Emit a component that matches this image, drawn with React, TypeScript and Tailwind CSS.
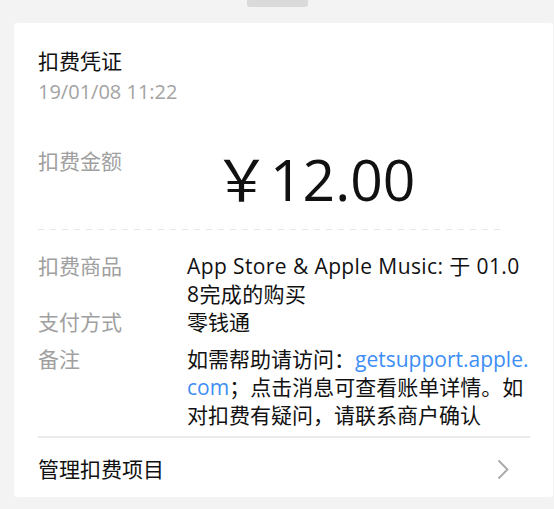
import React from 'react';

const rows = [
  {
    label: '扣费商品',
    value: (
      <span className="tracking-[0.4px]">
        App Store &amp; Apple Music: 于 01.0
        <br />
        8完成的购买
      </span>
    ),
  },
  { label: '支付方式', value: <>零钱通</> },
];

export default function App() {
  return (
    <div className="min-h-screen bg-[#f3f3f3] pb-3 font-['Open_Sans','Noto_Sans_CJK_SC',sans-serif] text-[#111]">
      <div className="flex justify-center h-[7px] overflow-hidden">
        <div className="mt-[-19px] h-[26px] w-[61px] rounded-[3px] bg-[#dadada] text-center text-[14px] leading-[26px] text-white">
          11:22
        </div>
      </div>

      <div className="mt-4 ml-[14px] mr-px rounded-[3px] bg-white pt-6 pl-6 pr-[23px] pb-[14px]">
        <h1 className="text-[21px] leading-7">扣费凭证</h1>
        <p className="mt-[3px] text-[20px] leading-7 text-[#a3a3a3]">19/01/08 11:22</p>

        <div className="mt-[41px] flex items-start">
          <div className="w-[149px] shrink-0 text-[21px] leading-7 text-[#a0a0a0]">扣费金额</div>
          <div className="mt-1 pl-[26px] text-[57px] leading-none">￥12.00</div>
        </div>

        <div className="mt-[21px] mr-[29px] h-px bg-[linear-gradient(to_right,#e6e6e6_50%,transparent_50%)] bg-[length:12px_1px]" />

        <div className="mt-[22px]">
          {rows.map(row => (
            <div key={row.label} className="flex text-[21px] leading-7">
              <div className="w-[149px] shrink-0 text-[#a0a0a0]">{row.label}</div>
              <div className="whitespace-nowrap">{row.value}</div>
            </div>
          ))}

          <div className="mt-[9px] flex text-[21px] leading-7">
            <div className="w-[149px] shrink-0 text-[#a0a0a0]">备注</div>
            <div className="whitespace-nowrap">
              如需帮助请访问：<span className="text-[#3d8ef5]">getsupport.apple.</span>
              <br />
              <span className="text-[#3d8ef5]">com</span>；点击消息可查看账单详情。如
              <br />
              对扣费有疑问，请联系商户确认
            </div>
          </div>
        </div>

        <div className="mt-[7px] h-[2px] bg-[#ebebeb]" />

        <div className="mt-[17px] flex items-center justify-between">
          <span className="text-[21px] leading-7">管理扣费项目</span>
          <svg width="12" height="21" viewBox="0 0 12 21" className="mr-[21px]" fill="none">
            <polyline points="1.5,1.5 10.5,10.5 1.5,19.5" stroke="#a8a8a8" strokeWidth="1.8" />
          </svg>
        </div>
      </div>
    </div>
  );
}
